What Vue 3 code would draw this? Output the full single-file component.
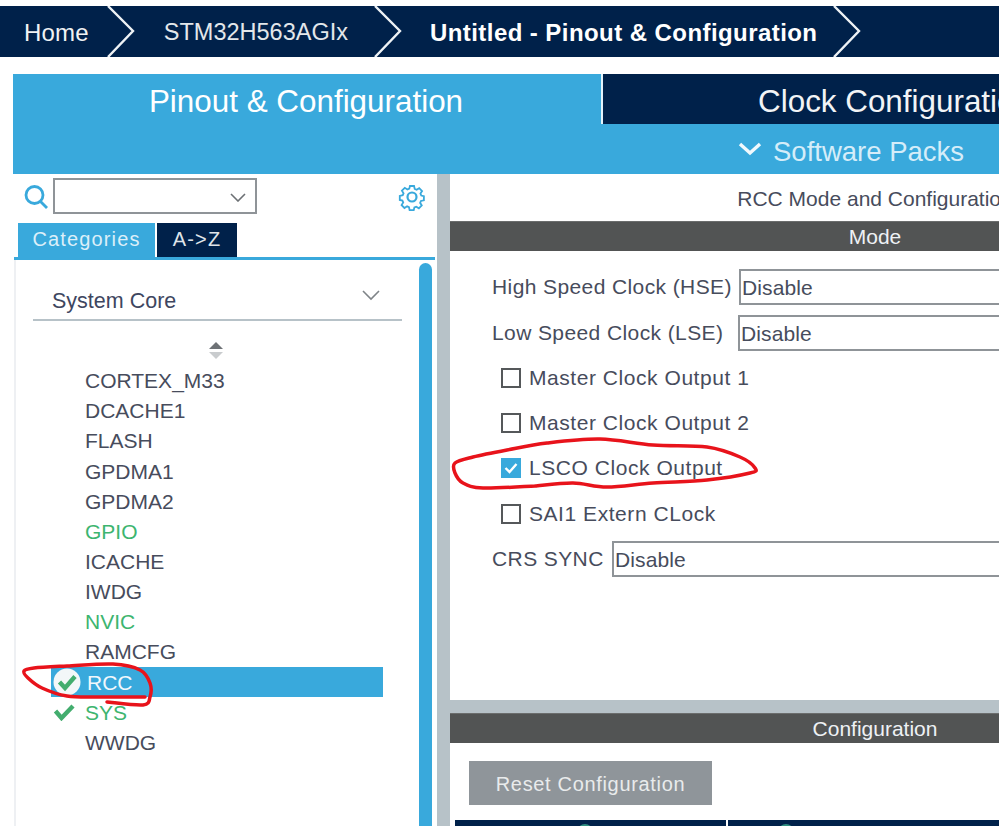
<script setup>
const items = [
  { name: 'CORTEX_M33' }, { name: 'DCACHE1' }, { name: 'FLASH' }, { name: 'GPDMA1' }, { name: 'GPDMA2' },
  { name: 'GPIO', green: true }, { name: 'ICACHE' }, { name: 'IWDG' }, { name: 'NVIC', green: true },
  { name: 'RAMCFG' }, { name: 'RCC', selected: true }, { name: 'SYS', green: true, check: true }, { name: 'WWDG' }
]
const checks = [
  { label: 'Master Clock Output 1' }, { label: 'Master Clock Output 2' },
  { label: 'LSCO Clock Output', on: true }, { label: 'SAI1 Extern CLock' }
]
function smooth(p) {
  let d = `M${p[0][0]} ${p[0][1]}`
  for (let i = 0; i < p.length - 1; i++) {
    const a = p[i - 1] || p[i], b = p[i], c = p[i + 1], e = p[i + 2] || c
    d += ` C${b[0] + (c[0] - a[0]) / 6} ${b[1] + (c[1] - a[1]) / 6} ${c[0] - (e[0] - b[0]) / 6} ${c[1] - (e[1] - b[1]) / 6} ${c[0]} ${c[1]}`
  }
  return d
}
const rccLoop = smooth([[145,697],[100,697],[67,696],[42,688],[28,678],[24,671],[34,668],[67,666],[113,664],[140,670],[150,683],[150,697],[143,705],[107,702]])
const lscoLoop = smooth([[535,486],[483,488],[463,483],[455,473],[455,463],[473,457],[507,450],[547,443],[600,439],[653,445],[707,447],[740,457],[755,468],[750,473],[707,480],[653,483],[607,487],[573,483],[535,486]])
</script>

<template>
  <div class="page">
    <header class="crumbs">
      <span class="crumb home">Home</span>
      <svg class="chev chev1" width="28" height="51" viewBox="0 0 28 51"><path d="M1 0 L26 25 L1 51" /></svg>
      <span class="crumb mcu">STM32H563AGIx</span>
      <svg class="chev chev2" width="28" height="51" viewBox="0 0 28 51"><path d="M1 0 L26 25 L1 51" /></svg>
      <span class="crumb project">Untitled - Pinout &amp; Configuration</span>
      <svg class="chev chev3" width="28" height="51" viewBox="0 0 28 51"><path d="M1 0 L26 25 L1 51" /></svg>
    </header>

    <nav class="tabs">
      <div class="tab active">Pinout &amp; Configuration</div>
      <div class="tab clock">Clock Configuration</div>
    </nav>
    <div class="packs">
      <svg width="24" height="14" viewBox="0 0 24 14" class="packs-chev"><path d="M2 2 L12 11 L22 2" /></svg>
      <span class="packs-text">Software Packs</span>
    </div>

    <main class="body">
      <aside class="left">
        <div class="search-row">
          <svg class="search" width="24" height="26" viewBox="0 0 24 26"><circle cx="10.5" cy="11" r="8.5" /><path d="M16.5 17.5 L23 24" /></svg>
          <div class="combo">
            <svg width="16" height="9" viewBox="0 0 16 9"><path d="M1 1 L8 8 L15 1" /></svg>
          </div>
          <svg class="gear" width="28" height="28" viewBox="0 0 28 28">
            <circle cx="14" cy="14" r="4.5" />
            <path d="M11.5 1.5h5l.8 3.6 2.3 1 3.2-2 3.5 3.5-2 3.2 1 2.3 3.2.8v5l-3.6.8-1 2.3 2 3.2-3.5 3.5-3.2-2-2.3 1-.8 3.2h-5l-.8-3.6-2.3-1-3.2 2-3.5-3.5 2-3.2-1-2.3-3.2-.8v-5l3.6-.8 1-2.3-2-3.2 3.5-3.5 3.2 2 2.3-1z" transform="translate(14 14) scale(.82) translate(-14 -14.9)" />
          </svg>
        </div>
        <div class="left-tabs">
          <div class="ltab cat">Categories</div>
          <div class="ltab az">A-&gt;Z</div>
        </div>
        <div class="list-wrap">
          <div class="list-col">
            <div class="group">
              <span class="group-text">System Core</span>
              <svg width="18" height="11" viewBox="0 0 18 11"><path d="M1 1 L9 9 L17 1" /></svg>
            </div>
            <div class="sort">
              <svg width="14" height="19" viewBox="0 0 14 19"><path class="up" d="M7 1 L14 8 H0 Z" /><path class="down" d="M0 11 H14 L7 18 Z" /></svg>
            </div>
            <div v-for="it in items" :key="it.name" class="row" :class="{ selected: it.selected, green: it.green }">
              <span class="slot">
                <svg v-if="it.selected" width="28" height="28" viewBox="0 0 28 28">
                  <circle cx="14" cy="14" r="13.5" fill="#f3f7f8" />
                  <path d="M6.5 14 L12 20 L22 8.5" fill="none" stroke="#43ad6e" stroke-width="4.4" />
                </svg>
                <svg v-if="it.check" width="22" height="18" viewBox="0 0 22 18">
                  <path d="M2.5 8 L8.5 15 L20 3" fill="none" stroke="#43ad6e" stroke-width="4.4" />
                </svg>
              </span>
              <span class="row-text">{{ it.name }}</span>
            </div>
          </div>
          <div class="scroll"></div>
        </div>
      </aside>

      <section class="right">
        <div class="mode-pane">
          <div class="pane-title">RCC Mode and Configuration</div>
          <div class="bar">Mode</div>
          <div class="form">
            <div class="field hse"><label>High Speed Clock (HSE)</label><div class="select">Disable</div></div>
            <div class="field lse"><label>Low Speed Clock (LSE)</label><div class="select">Disable</div></div>
            <div v-for="c in checks" :key="c.label" class="check-row">
              <span class="box" :class="{ on: c.on }">
                <svg v-if="c.on" width="20" height="20" viewBox="0 0 20 20"><path d="M4.5 10 L8.5 14 L15.5 6" fill="none" stroke="#fff" stroke-width="2.4" /></svg>
              </span>
              <span>{{ c.label }}</span>
            </div>
            <div class="field crs"><label>CRS SYNC</label><div class="select">Disable</div></div>
          </div>
        </div>
        <div class="config-pane">
          <div class="bar">Configuration</div>
          <button class="reset">Reset Configuration</button>
          <div class="table-head">
            <div class="th first"><i></i></div>
            <div class="th second"><i></i></div>
          </div>
        </div>
      </section>
    </main>

    <svg class="ink" width="999" height="826" viewBox="0 0 999 826">
      <path :d="rccLoop" />
      <path :d="lscoLoop" />
    </svg>
  </div>
</template>

<style>
html, body { margin: 0; background: #fff; }
</style>

<style scoped>
.page {
  position: relative;
  width: 999px;
  height: 826px;
  overflow: hidden;
  background: #fff;
  padding-top: 6px;
  box-sizing: border-box;
  font-family: "Liberation Sans", Arial, sans-serif;
  color: #474c5c;
}
.crumbs {
  display: flex;
  align-items: center;
  height: 51px;
  background: #00214a;
  color: #fff;
  font-size: 24px;
  white-space: nowrap;
}
.crumb { margin-top: 2px; }
.chev { flex: none; }
.chev path { fill: none; stroke: #eef2f5; stroke-width: 2.4; }
.home { margin-left: 24px; color: #f0f2f4; letter-spacing: .2px; }
.chev1 { margin-left: 18px; }
.mcu { margin-left: 29px; font-size: 23.5px; color: #e3e7ea; }
.chev2 { margin-left: 26px; }
.project { margin-left: 28px; font-weight: 700; letter-spacing: .43px; }
.chev3 { margin-left: 16px; }
.tabs {
  display: flex;
  margin: 17px 0 0 13px;
  height: 50px;
}
.tab {
  flex: none;
  font-size: 31.4px;
  line-height: 56px;
  text-align: center;
  color: #fff;
  box-sizing: border-box;
}
.tab.active { width: 590px; background: #39a9dc; border-right: 2px solid #e4f3fa; padding-right: 2px; }
.tab.clock { width: 584px; background: #00214a; color: #f2f4f6; white-space: nowrap; }
.packs {
  display: flex;
  align-items: center;
  justify-content: flex-start;
  margin-left: 13px;
  height: 50px;
  padding-left: 725px;
  background: #39a9dc;
  color: #d5edf9;
  font-size: 27.5px;
  white-space: nowrap;
  box-sizing: border-box;
}
.packs-text { margin-top: 5px; }
.packs-chev { margin-right: 11px; }
.packs-chev path { fill: none; stroke: #f1f9fd; stroke-width: 3.4; }
.body {
  display: flex;
  margin-left: 13px;
  height: 652px;
  background: #b7c2c8;
}
.left {
  flex: none;
  width: 424px;
  background: #fff;
  display: flex;
  flex-direction: column;
}
.search-row {
  display: flex;
  align-items: flex-start;
  height: 49px;
  padding: 4px 0 0 11px;
  box-sizing: border-box;
}
.search { margin-top: 6px; }
.search circle, .search path { fill: none; stroke: #39a9dc; stroke-width: 2.8; }
.combo {
  width: 204px;
  height: 36px;
  margin-left: 5px;
  border: 2px solid #8f9498;
  box-sizing: border-box;
  display: flex;
  align-items: center;
  justify-content: flex-end;
  padding-right: 9px;
}
.combo svg { margin-top: 2px; }
.combo path { fill: none; stroke: #6c7074; stroke-width: 1.6; }
.gear { margin: 5px 0 0 141px; }
.gear circle, .gear path { fill: none; stroke: #39a9dc; stroke-width: 2.2; }
.left-tabs {
  display: flex;
  gap: 2px;
  height: 34px;
  padding-left: 5px;
}
.ltab {
  font-size: 20px;
  line-height: 32px;
  text-align: center;
  letter-spacing: 1.15px;
  box-sizing: border-box;
}
.cat { width: 137px; background: #39a9dc; color: #dceff9; }
.az { width: 80px; background: #00214a; color: #dfe4e9; }
.list-wrap {
  flex: 1;
  display: flex;
  border-top: 3px solid #39a9dc;
  margin: 0 2px 0 1px;
  min-height: 0;
}
.list-col {
  flex: 1;
  border-left: 2px solid #eef0f3;
  padding-top: 17px;
  min-width: 0;
}
.group {
  display: flex;
  justify-content: space-between;
  align-items: center;
  margin-left: 17px;
  width: 369px;
  height: 44px;
  padding: 0 22px 2px 19px;
  box-sizing: border-box;
  border-bottom: 2px solid #b7c2c8;
  font-size: 21.5px;
  color: #3e4660;
}
.group-text { margin-top: 8px; }
.group svg { margin-top: -4px; }
.group path { fill: none; stroke: #7f8488; stroke-width: 1.6; }
.sort {
  height: 44px;
  padding: 20px 0 0 193px;
  box-sizing: border-box;
  line-height: 0;
}
.sort .up { fill: #6e7276; }
.sort .down { fill: #c9ccce; }
.row {
  display: flex;
  align-items: center;
  width: 332px;
  margin-left: 35px;
  height: 30.17px;
  font-size: 21px;
  white-space: nowrap;
}
.row-text { margin-top: 2px; }
.slot {
  flex: none;
  width: 34px;
  display: flex;
  align-items: center;
  padding-left: 2px;
  box-sizing: border-box;
}
.row.green { color: #3db56f; }
.row.selected { background: #39a9dc; color: #f2f8fc; }
.row.selected .row-text { margin-left: 2px; }
.scroll {
  flex: none;
  width: 13px;
  margin: 3px 3px 0 0;
  background: #39a9dc;
  border-radius: 7px 7px 0 0;
}
.right {
  flex: none;
  width: 850px;
  margin-left: 13px;
  display: flex;
  flex-direction: column;
  gap: 13px;
  color: #474c5c;
}
.mode-pane {
  height: 526px;
  background: #fff;
}
.pane-title {
  height: 47px;
  line-height: 49px;
  text-align: center;
  font-size: 21px;
  white-space: nowrap;
}
.bar {
  height: 30px;
  line-height: 29px;
  background: #525454;
  color: #eef1f4;
  text-align: center;
  font-size: 21px;
  border-top: 1px solid #6b6d6d;
  box-sizing: border-box;
}
.form { font-size: 21px; white-space: nowrap; }
.field { display: flex; align-items: center; padding-left: 42px; letter-spacing: .4px; }
.select {
  flex: 1;
  height: 36px;
  line-height: 33px;
  border: 2px solid #8f9498;
  border-right: 0;
  box-sizing: border-box;
  padding-left: 1px;
  font-size: 21px;
  letter-spacing: .1px;
}
.hse { margin-top: 18px; }
.hse label { width: 247px; }
.lse { margin-top: 10px; margin-bottom: 4px; }
.lse label { width: 246px; }
.check-row {
  display: flex;
  align-items: center;
  gap: 8px;
  height: 45.3px;
  padding-left: 51px;
  letter-spacing: .55px;
}
.box {
  width: 20px;
  height: 20px;
  box-sizing: border-box;
  border: 2px solid #55585a;
  line-height: 0;
}
.box.on { border: 0; background: #39a9dc; }
.crs { margin-top: 5px; }
.crs label { width: 120px; }
.config-pane {
  flex: 1;
  background: #fff;
  min-height: 0;
}
.reset {
  display: block;
  width: 243px;
  height: 44px;
  margin: 18px 0 15px 19px;
  background: #8f959a;
  border: 0;
  padding: 2px 0 0;
  color: #e9ebec;
  font: 20px "Liberation Sans", Arial, sans-serif;
  letter-spacing: .67px;
}
.table-head { display: flex; gap: 2px; height: 10px; margin-left: 5px; }
.th { background: #00214a; height: 10px; overflow: hidden; display: flex; justify-content: center; }
.th.first { width: 271px; padding-right: 12px; box-sizing: border-box; }
.th.second { width: 570px; padding-right: 60px; box-sizing: border-box; justify-content: flex-start; padding-left: 50px; }
.th i { display: block; width: 16px; height: 16px; margin-top: 4px; border-radius: 50%; background: #2f8f80; }
.ink {
  position: absolute;
  left: 0;
  top: 0;
  pointer-events: none;
}
.ink path { fill: none; stroke: #e8131b; stroke-width: 3.5; stroke-linecap: round; }
</style>
